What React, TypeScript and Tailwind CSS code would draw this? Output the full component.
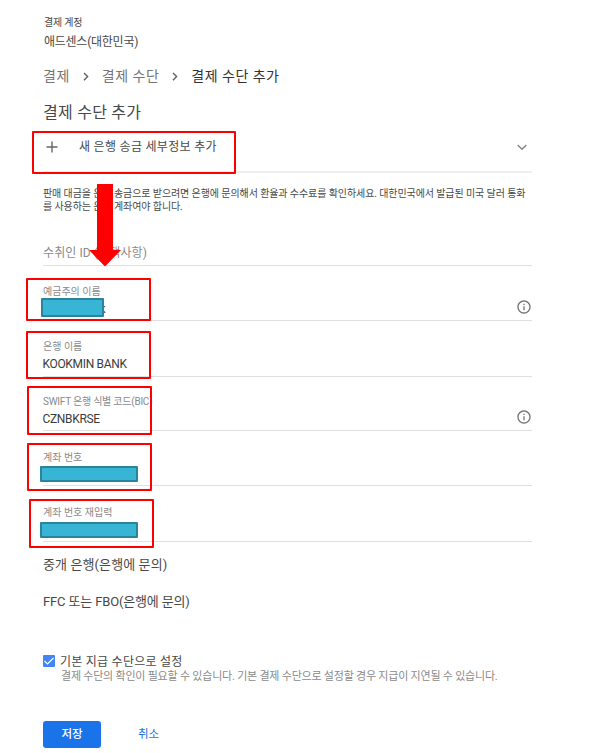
import React from "react";

interface FieldProps {
  label: string;
  value?: string;
  info?: boolean;
  className: string;
  labelClass?: string;
  valueClass?: string;
}

const InfoIcon: React.FC = () => (
  <svg className="h-4 w-4 fill-[#757575]" viewBox="0 0 24 24">
    <path d="M11 17h2v-6h-2v6zm1-15C6.48 2 2 6.48 2 12s4.48 10 10 10 10-4.48 10-10S17.52 2 12 2zm0 18c-4.41 0-8-3.59-8-8s3.59-8 8-8 8 3.59 8 8-3.59 8-8 8zM11 9h2V7h-2v2z" />
  </svg>
);

const Crumb: React.FC = () => (
  <svg className="h-4 w-8 shrink-0" viewBox="0 0 32 16" fill="none">
    <path d="M14 5l3.600 3.600L14 12.200" stroke="#616161" strokeWidth="1.4" />
  </svg>
);

const Field: React.FC<FieldProps> = ({
  label,
  value,
  info,
  className,
  labelClass = "",
  valueClass = "",
}) => (
  <div className={`flex justify-between border-b border-[#e0e0e0] ${className}`}>
    <div className="flex flex-col pt-[19px] whitespace-nowrap">
      <span
        className={`text-[10px] leading-[14px] text-[#8a8a8a] ${labelClass}`}
      >
        {label}
      </span>
      <span
        className={`-ml-[0.5px] pt-[2px] text-[12px] leading-4 tracking-[-0.33px] text-[#3c3c3c] ${valueClass}`}
      >
        {value}
      </span>
    </div>
    {info && (
      <div className="pt-[33px]">
        <InfoIcon />
      </div>
    )}
  </div>
);

// red frames drawn over the steps to fill in
const frames = [
  "left-[32px] top-[131px] w-[204px] h-[43px]",
  "left-[26px] top-[278px] w-[125px] h-[43px]",
  "left-[26px] top-[331px] w-[125px] h-[48px]",
  "left-[27px] top-[386px] w-[125px] h-[49px]",
  "left-[27px] top-[443px] w-[125px] h-[48px]",
  "left-[29px] top-[499px] w-[125px] h-[49px]",
];

// blocks that hide private values
const masks = [
  "left-[41px] top-[298px] w-[63px] h-[19px]",
  "left-[40px] top-[466px] w-[98px] h-[16px]",
  "left-[40px] top-[522px] w-[98px] h-[16px]",
];

const Annotations: React.FC = () => (
  <>
    {masks.map((pos) => (
      <div
        key={pos}
        className={`absolute rounded-[1px] border-2 border-[#2a859b] bg-[#38b5d5] ${pos}`}
      />
    ))}
    {frames.map((pos) => (
      <div
        key={pos}
        className={`absolute rounded-[1px] border-2 border-[#ff0000] ${pos}`}
      />
    ))}
    <svg
      className="absolute top-[184px] left-[89px] h-[83px] w-8 fill-[#ff0000]"
      viewBox="0 0 32 83"
    >
      <path d="M8 0h16v66h8L16 82.500 0 66h8z" />
    </svg>
  </>
);

export default function App() {
  return (
    <div className="relative h-[753px] w-[592px] overflow-hidden bg-white font-[Roboto,'Noto_Sans_CJK_KR',sans-serif] text-[#484848]">
      <div className="ml-[43px] flex w-[489px] flex-col">
        {/* Account */}
        <header className="flex flex-col pt-4 pl-[1px]">
          <span className="text-[10px] leading-[14px] tracking-[-0.2px]">
            결제 계정
          </span>
          <span className="pt-[3px] text-[12px] leading-[18px] tracking-[-0.25px]">
            애드센스(대한민국)
          </span>
        </header>

        <nav className="mt-[15px] flex h-5 items-center text-[14px] tracking-[0.5px] whitespace-nowrap text-[#757575]">
          <span>결제</span>
          <Crumb />
          <span>결제 수단</span>
          <Crumb />
          <span className="text-[#333333]">결제 수단 추가</span>
        </nav>

        <h1 className="mt-[15px] text-[16px] leading-6 tracking-[0.25px]">
          결제 수단 추가
        </h1>

        <div className="flex h-[48px] items-start border-b-2 border-[#eeeeee] pt-3">
          <svg className="mt-[4px] ml-[3px] h-3 w-3" viewBox="0 0 12 12">
            <path d="M6 .5v11M.5 6h11" stroke="#666666" strokeWidth="1.4" />
          </svg>
          <span className="ml-[21px] flex-1 pt-px text-[12px] leading-[18px] tracking-[0.3px]">
            새 은행 송금 세부정보 추가
          </span>
          <svg
            className="mt-[7px] mr-[5px] h-[7px] w-[10px]"
            viewBox="0 0 10 7"
            fill="none"
          >
            <path d="M.7 1L5 5.300 9.300 1" stroke="#858585" strokeWidth="1.4" />
          </svg>
        </div>

        <p className="mt-[14px] text-[10px] leading-[13px] tracking-[-0.09px] whitespace-nowrap">
          판매 대금을 은행 송금으로 받으려면 은행에 문의해서 환율과 수수료를
          확인하세요. 대한민국에서 발급된 미국 달러 통화
          <br />를 사용하는 은행 계좌여야 합니다.
        </p>

        {/* Bank details */}
        <div className="flex h-[53px] items-end border-b border-[#e0e0e0] pb-[3px] text-[12px] leading-[18px] tracking-[0.1px] text-[#8a8a8a]">
          수취인 ID (선택사항)
        </div>
        <Field
          label="예금주의 이름"
          value="k"
          info
          className="h-[55px]"
          valueClass="pl-[57px]"
        />
        <Field label="은행 이름" value="KOOKMIN BANK" className="h-[56px]" />
        <Field
          label="SWIFT 은행 식별 코드(BIC)"
          value="CZNBKRSE"
          info
          className="-mt-px h-[55px]"
          labelClass="tracking-[-0.24px]"
        />
        <Field label="계좌 번호" className="h-[55px] pt-px" />
        <Field label="계좌 번호 재입력" className="h-[56px] pt-px" />

        <div className="mt-[14px] flex flex-col gap-[19px] text-[13px] leading-[18px]">
          <span className="tracking-[0.1px]">중개 은행(은행에 문의)</span>
          <span className="tracking-[-0.15px]">FFC 또는 FBO(은행에 문의)</span>
        </div>

        <label className="mt-[41px] flex h-[18px] items-center gap-[5px] text-[12px] tracking-[0.25px]">
          <svg className="h-3 w-3" viewBox="0 0 12 12" fill="none">
            <rect width="12" height="12" rx="1" fill="#4285f4" />
            <path d="M1.500 6l3 3L10.500 3" stroke="#ffffff" strokeWidth="1.1" />
          </svg>
          <span className="pt-px">기본 지급 수단으로 설정</span>
        </label>
        <p className="pl-[18px] text-[11px] leading-[14px] tracking-[-0.22px] whitespace-nowrap text-[#8a8a8a]">
          결제 수단의 확인이 필요할 수 있습니다. 기본 결제 수단으로 설정할 경우
          지급이 지연될 수 있습니다.
        </p>

        <div className="mt-[37px] flex items-center gap-[37px] text-[11.5px]">
          <button className="h-[27px] w-[58px] rounded-[3px] bg-[#1a73e8] font-medium text-white">
            저장
          </button>
          <button className="text-[#1a73e8]">취소</button>
        </div>
      </div>
      <Annotations />
    </div>
  );
}
